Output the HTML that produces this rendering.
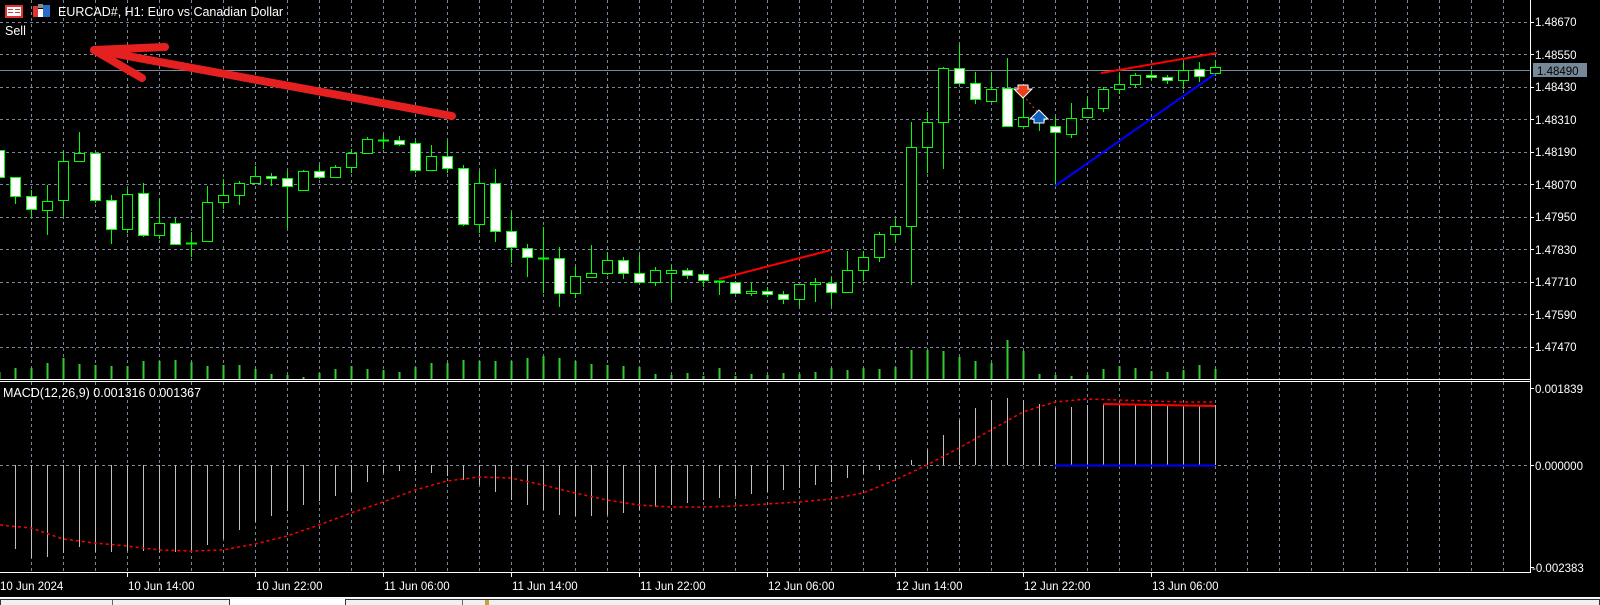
<!DOCTYPE html>
<html><head><meta charset="utf-8"><style>
html,body{margin:0;padding:0;background:#000;width:1600px;height:605px;overflow:hidden}
svg{display:block}
text{font-family:"Liberation Sans",sans-serif;font-size:11.5px;fill:#fff}
</style></head><body>
<svg id="s" width="1600" height="605" viewBox="0 0 1600 605" xmlns="http://www.w3.org/2000/svg">
<rect width="1600" height="605" fill="#000"/>
<g id="grid" stroke="#778899" stroke-width="1" stroke-dasharray="3,3" shape-rendering="crispEdges"></g>
<line x1="0" y1="70.5" x2="1530" y2="70.5" stroke="#778899" shape-rendering="crispEdges"/>
<g id="vol" stroke="#32cd32" stroke-width="2" shape-rendering="crispEdges"></g>
<g id="hist" stroke="#c0c0c0" stroke-width="1" shape-rendering="crispEdges"></g>
<polyline id="sig" fill="none" stroke="#ff0000" stroke-width="1.5" stroke-dasharray="3,3"/>
<g id="cdl" shape-rendering="crispEdges"></g>
<!-- trendlines -->
<line x1="719" y1="279" x2="831" y2="250" stroke="#ff0000" stroke-width="2"/>
<line x1="1101" y1="73" x2="1217" y2="53" stroke="#ff0000" stroke-width="2"/>
<line x1="1055" y1="186" x2="1215" y2="74" stroke="#0000ff" stroke-width="2"/>
<line x1="1103" y1="404" x2="1215" y2="406" stroke="#ff0000" stroke-width="2"/>
<line x1="1055" y1="465.5" x2="1215" y2="465.5" stroke="#0000ff" stroke-width="2"/>
<line x1="1023" y1="95" x2="1039" y2="114" stroke="#e05030" stroke-width="1" stroke-dasharray="2,3"/>
<!-- arrows -->
<path d="M1018 85 h10 v4 h4 l-9 9 l-9 -9 h4z" fill="#e8401c" stroke="#fff" stroke-width="1"/>
<path d="M1034 123 h10 v-4 h4 l-9 -9 l-9 9 h4z" fill="#1060c0" stroke="#fff" stroke-width="1"/>
<!-- big red arrow -->
<g stroke="#e52020" stroke-width="8" stroke-linecap="round" fill="none">
<line x1="95" y1="50" x2="452" y2="116"/>
<line x1="94" y1="50" x2="165" y2="47"/>
<line x1="94" y1="50" x2="142" y2="78"/>
</g>
<!-- pane separators and axes -->
<g stroke="#fff" stroke-width="1" shape-rendering="crispEdges">
<line x1="0" y1="379.5" x2="1530" y2="379.5"/>
<line x1="0" y1="381.5" x2="1530" y2="381.5"/>
<line x1="1530.5" y1="0" x2="1530.5" y2="573"/>
<line x1="0" y1="572.5" x2="1531" y2="572.5"/>
</g>
<g id="ticks" stroke="#fff" stroke-width="1" shape-rendering="crispEdges"></g>
<!-- header -->
<rect x="5" y="5" width="18" height="13" fill="#d33" />
<rect x="7" y="7" width="14" height="9" fill="#fff"/>
<g stroke="#d33" stroke-width="1"><line x1="8" y1="9.5" x2="13" y2="9.5"/><line x1="8" y1="12.5" x2="13" y2="12.5"/><line x1="15" y1="9.5" x2="20" y2="9.5"/><line x1="15" y1="12.5" x2="20" y2="12.5"/></g>
<rect x="33" y="6" width="5" height="11" fill="#d33"/><rect x="38" y="9" width="5" height="8" fill="#fff"/><rect x="43" y="5" width="7" height="12" fill="#2a6bc8"/><rect x="38" y="4" width="5" height="4" fill="#888"/>
<text x="58" y="16" style="font-size:12.5px">EURCAD#, H1:  Euro vs Canadian Dollar</text>
<text x="5" y="35" style="font-size:12.5px">Sell</text>
<text x="3" y="397" style="font-size:12.5px">MACD(12,26,9) 0.001316 0.001367</text>
<!-- price axis -->
<g style="font-size:12px">
<text x="1535" y="26">1.48670</text>
<text x="1535" y="59">1.48550</text>
<text x="1535" y="91">1.48430</text>
<text x="1535" y="124">1.48310</text>
<text x="1535" y="156">1.48190</text>
<text x="1535" y="189">1.48070</text>
<text x="1535" y="221">1.47950</text>
<text x="1535" y="254">1.47830</text>
<text x="1535" y="286">1.47710</text>
<text x="1535" y="319">1.47590</text>
<text x="1535" y="351">1.47470</text>
<rect x="1533" y="63" width="54" height="14" fill="#778899"/>
<text x="1537" y="75" style="fill:#000">1.48490</text>
<text x="1535" y="393">0.001839</text>
<text x="1535" y="470">0.000000</text>
<text x="1532" y="572">-0.002383</text>
</g>
<g style="font-size:12px">
<text x="0" y="590">10 Jun 2024</text>
<text x="128" y="590">10 Jun 14:00</text>
<text x="256" y="590">10 Jun 22:00</text>
<text x="384" y="590">11 Jun 06:00</text>
<text x="512" y="590">11 Jun 14:00</text>
<text x="640" y="590">11 Jun 22:00</text>
<text x="768" y="590">12 Jun 06:00</text>
<text x="896" y="590">12 Jun 14:00</text>
<text x="1024" y="590">12 Jun 22:00</text>
<text x="1152" y="590">13 Jun 06:00</text>
</g>
<!-- bottom tabs -->
<rect x="0" y="597" width="1600" height="8" fill="#f0f0f0"/>
<line x1="0" y1="597.5" x2="1600" y2="597.5" stroke="#fff"/>
<rect x="0.5" y="599.5" width="229" height="8" fill="#f0f0f0" stroke="#333"/>
<line x1="112.5" y1="600" x2="112.5" y2="605" stroke="#666"/>
<rect x="230" y="599" width="115" height="6" fill="#fff"/>
<rect x="345.5" y="599.5" width="1254" height="8" fill="#f0f0f0" stroke="#333"/>
<line x1="462.5" y1="600" x2="462.5" y2="605" stroke="#666"/>
<rect x="485" y="600" width="4" height="5" fill="#c8a040"/>
</svg>
<script>
var NS="http://www.w3.org/2000/svg";
function el(p,t,a){var e=document.createElementNS(NS,t);for(var k in a)e.setAttribute(k,a[k]);document.getElementById(p).appendChild(e);return e;}
// grid
for(var k=1;k<=47;k++){var x=32*k-0.5;el("grid","line",{x1:x,y1:0,x2:x,y2:379});el("grid","line",{x1:x,y1:382,x2:x,y2:572});}
[21.5,54,86.5,119,151.5,184,216.5,249,281.5,314,346.5].forEach(function(y){y=Math.round(y)+0.5;el("grid","line",{x1:0,y1:y,x2:1530,y2:y});el("ticks","line",{x1:1530,y1:y,x2:1534,y2:y});});
el("grid","line",{x1:0,y1:465.5,x2:1530,y2:465.5});
[388.5,465.5,567.5].forEach(function(y){el("ticks","line",{x1:1530,y1:y,x2:1534,y2:y});});
for(var k=0;k<10;k++){var x=128*k-0.5;el("ticks","line",{x1:x,y1:572,x2:x,y2:577});}
// candles: [wickTop,wickBot,bodyTop,bodyBot,white]
var C=[[145,180,150,177,1],[177,204,177,196,1],[190,217,196,209,1],[185,235,201,210,0],[151,216,161,200,0],[132,161,153,161,0],[153,203,153,200,1],[195,244,200,229,1],[189,233,194,229,0],[183,237,193,235,1],
[199,239,223,235,0],[218,244,223,244,1],[232,257,243,243,2],[186,242,202,241,0],[179,209,195,202,0],[181,205,183,195,0],[166,184,176,183,0],[173,186,176,178,1],[171,228,178,186,1],[170,191,171,190,0],
[165,179,171,177,1],[165,177,167,177,0],[149,173,153,167,0],[137,153,139,153,0],[135,149,140,140,2],[136,146,140,144,1],[141,173,143,170,1],[145,171,156,170,0],[141,173,156,168,1],[165,226,168,224,1],
[171,233,183,224,0],[169,242,183,231,1],[212,263,231,247,1],[244,277,248,257,1],[227,293,258,258,2],[247,307,258,293,1],[266,298,276,293,0],[245,277,273,277,0],[253,275,260,273,0],[257,279,260,273,1],
[255,283,273,282,1],[267,286,270,282,0],[265,300,270,273,0],[268,279,270,275,1],[272,287,274,280,1],[281,295,281,281,2],[281,293,282,293,1],[283,296,291,293,0],[287,297,291,294,1],[291,304,294,299,1],
[284,306,284,299,0],[278,302,282,284,0],[277,306,283,292,1],[251,292,270,292,0],[251,281,257,270,0],[232,262,234,257,0],[219,242,226,234,0],[122,285,147,226,0],[112,173,122,147,0],[67,169,68,122,0],
[45,85,68,83,1],[72,104,83,99,1],[73,102,89,101,0],[58,127,88,126,1],[89,126,117,126,0],[112,131,117,120,1],[117,186,126,132,1],[103,138,118,134,0],[97,117,108,117,0],[87,112,89,108,0],
[73,94,84,89,0],[73,87,75,84,0],[70,80,75,77,1],[75,84,77,80,1],[63,89,70,80,0],[62,82,69,76,1],[60,76,67,73,0]];
C.forEach(function(c,i){var x=16*i-1;
 el("cdl","line",{x1:x+0.5,y1:c[0],x2:x+0.5,y2:c[1],stroke:"#00ff00","stroke-width":1});
 if(c[4]==2||c[3]-c[2]<1){el("cdl","rect",{x:x-5,y:c[2]-0.5,width:11,height:2,fill:"#00ff00"});}
 else el("cdl","rect",{x:x-4.5,y:c[2]+0.5,width:10,height:c[3]-c[2],fill:c[4]?"#fff":"#000",stroke:"#00ff00","stroke-width":1});
});
// volumes
var V=[372,368,368,363,358,364,365,366,366,361,361,360,362,366,365,365,369,374,375,377,373,369,366,369,370,372,367,363,363,360,
361,361,361,358,356,358,361,364,365,366,367,374,375,373,376,368,376,374,375,373,374,372,368,370,368,369,367,350,350,351,
357,361,363,340,351,374,375,376,375,369,366,368,371,372,370,365,369];
V.forEach(function(v,i){var x=16*i-1+0.5;el("vol","line",{x1:x,y1:379,x2:x,y2:v});});
// histogram
var H=[540,549,558,557,553,547,552,552,551,551,552,552,551,545,539,530,522,516,511,505,501,496,492,482,473,471,471,473,476,480,
485,492,500,505,510,515,516,516,515,513,510,507,505,503,500,498,496,494,492,490,488,485,482,478,474,470,467,460,450,435,
420,408,400,398,400,404,408,407,405,403,404,405,405,406,406,405,405];
H.forEach(function(v,i){var x=16*i-1+0.5;el("hist","line",{x1:x,y1:465,x2:x,y2:v});});
// signal
var S=[[0,525],[31,528],[63,539],[95,543],[127,546],[159,550],[191,551],[223,550],[255,544],[287,536],[319,525],[351,513],[383,502],[415,490],[447,481],[479,477],[511,478],[543,485],[575,493],[607,500],[639,505],[671,507],[703,507],[735,506],[767,504],[799,502],[831,499],[863,493],[895,480],[927,465],[959,448],[991,430],[1023,412],[1055,402],[1087,399],[1119,400],[1151,401],[1183,402],[1215,402]];
document.getElementById("sig").setAttribute("points",S.map(function(p){return p.join(",")}).join(" "));
</script>
</body></html>
